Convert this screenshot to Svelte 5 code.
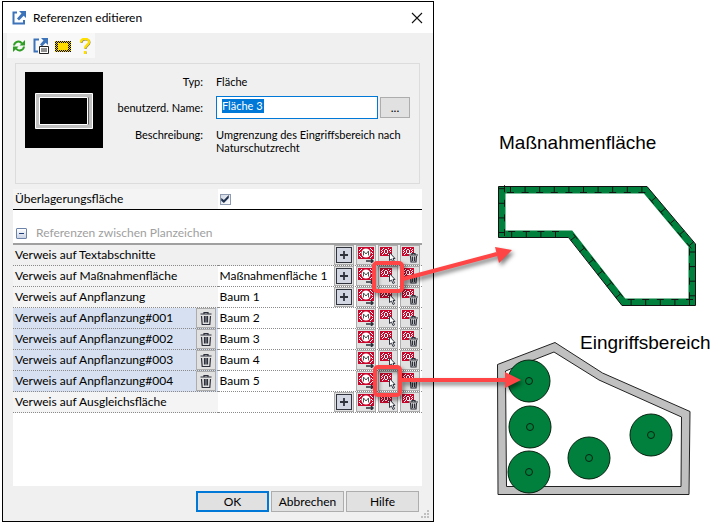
<script lang="ts">
  let name = $state('Fläche 3')
  let overlay = $state(true)

  const rows = [
    { label: 'Verweis auf Textabschnitte', value: '', add: true, kind: 'plain' },
    { label: 'Verweis auf Maßnahmenfläche', value: 'Maßnahmenfläche 1', add: true, kind: 'main' },
    { label: 'Verweis auf Anpflanzung', value: 'Baum 1', add: true, kind: 'main' },
    { label: 'Verweis auf Anpflanzung#001', value: 'Baum 2', add: false, kind: 'sub' },
    { label: 'Verweis auf Anpflanzung#002', value: 'Baum 3', add: false, kind: 'sub' },
    { label: 'Verweis auf Anpflanzung#003', value: 'Baum 4', add: false, kind: 'sub' },
    { label: 'Verweis auf Anpflanzung#004', value: 'Baum 5', add: false, kind: 'sub' },
    { label: 'Verweis auf Ausgleichsfläche', value: '', add: true, kind: 'main' }
  ]

  const trees = [[529, 381], [530, 427], [529, 472], [589, 458], [651, 435]]

  // edges of the planting area: start, end, distance of the first tick
  const edges = [
    [498.5, 186.5, 647, 186.5, 12],
    [647, 186.5, 695.5, 244, 14],
    [695.5, 244, 695.5, 305.5, 8],
    [695.5, 305.5, 622, 305.5, 6],
    [622, 305.5, 568.5, 237.5, 10],
    [568.5, 237.5, 498.5, 237.5, 13],
    [498.5, 237.5, 498.5, 186.5, 5]
  ]

  // every tick crosses the band and ends in a short bar along its inner side
  function ticks() {
    const out: string[] = []
    for (const [x1, y1, x2, y2, first] of edges) {
      const len = Math.hypot(x2 - x1, y2 - y1)
      const ux = (x2 - x1) / len
      const uy = (y2 - y1) / len
      for (let d = first; d < len - 1; d += 14.6) {
        const x = x1 + ux * d
        const y = y1 + uy * d
        const ix = x - uy * 6
        const iy = y + ux * 6
        out.push(`M${x} ${y}L${ix} ${iy}M${ix - ux * 3.5} ${iy - uy * 3.5}L${ix + ux * 3.5} ${iy + uy * 3.5}`)
      }
    }
    return out.join('')
  }
</script>

{#snippet trash()}
  <path d="M2.500 4h11M6 4V2.500h4V4M3.500 6l.7 8.500h7.600l.7-8.500M6.500 6v6.500M8 6v6.500M9.500 6v6.500" fill="none" stroke="#2c2f3a" stroke-width="1.200" />
{/snippet}

{#snippet plan()}
  <rect width="12" height="9" fill="#c9082d" />
  <path
    d="M3 1.500h1M8 1.500h1M2 2.500h1M5 2.500h2M10 2.500h1M1 3.500h1M4 3.500h1M7 3.500h1M9 3.500h1M2 4.500h1M4 4.500h1M7 4.500h1M10 4.500h1M1 5.500h1M4 5.500h1M7 5.500h1M9 5.500h1M3 6.500h1M5 6.500h2M10 6.500h1M2 7.500h1M8 7.500h2"
    stroke="#fff"
  />
{/snippet}

<svelte:head><title>Referenzen editieren</title></svelte:head>

<main>
  <section class="dialog">
    <header>
      <svg width="16" height="16" viewBox="0 0 16 16">
        <path d="M6 2.500H2.500V13.500H13V10" fill="none" stroke="#3d73b9" stroke-width="2" />
        <path d="M8 1h7v7l-2.300-2.300L8 10.500 6 8.500l4.500-5z" fill="#3d73b9" />
      </svg>
      <h1>Referenzen editieren</h1>
      <button class="close" aria-label="Schließen">
        <svg width="12" height="12" viewBox="0 0 12 12"><path d="M1 1l10 10M11 1L1 11" stroke="#111" stroke-width="1.100" /></svg>
      </button>
    </header>

    <nav>
      <button aria-label="Aktualisieren">
        <svg width="16" height="16" viewBox="0 0 16 16">
          <path d="M3 7.500C3.500 3.500 8.500 2 11 5.500M13 8.500C12.500 12.500 7.500 14 5 10.500" fill="none" stroke="#2f9e24" stroke-width="2" />
          <path d="M14 2v5.500H8.500zM2 14V8.500h5.500z" fill="#2f9e24" />
        </svg>
      </button>
      <button aria-label="Referenz">
        <svg width="16" height="16" viewBox="0 0 16 16">
          <path d="M6 1.500H1.500v12H5" fill="none" stroke="#3d73b9" stroke-width="2" />
          <path d="M8 0h7v7l-2.300-2.300L9 8.500 7 6.500l3.500-4z" fill="#3d73b9" />
          <path d="M6.500 8.500h9v7h-9zM8 11h6M8 13h6" fill="#fff" stroke="#222" />
        </svg>
      </button>
      <button aria-label="Fläche zeigen">
        <svg width="16" height="16" viewBox="0 0 16 16">
          <defs>
            <pattern id="dots" width="2" height="2" patternUnits="userSpaceOnUse">
              <rect width="2" height="2" fill="#f2cf00" /><path d="M0 0h1v1H0zM1 1h1v1H1z" fill="#000" />
            </pattern>
          </defs>
          <rect y="3" width="16" height="11" fill="url(#dots)" />
          <rect x="3" y="5" width="10" height="7" fill="#ffdc00" />
        </svg>
      </button>
      <button aria-label="Hilfe anzeigen">
        <svg width="16" height="16" viewBox="0 0 16 16">
          <path d="M4.500 5c0-5 8-4.500 8-.5 0 3-4 3-4 6.500M8.500 13.500v3" fill="none" stroke="#777" stroke-width="2" />
          <path d="M4 4.500c0-5 8-4.500 8-.5 0 3-4 3-4 6.500M8 13v3" fill="none" stroke="#ffdf00" stroke-width="2.400" />
        </svg>
      </button>
    </nav>

    <div class="group">
      <svg class="preview" width="78" height="76" viewBox="0 0 78 76">
        <rect width="78" height="76" />
        <rect x="12.500" y="23.500" width="53" height="31" fill="none" stroke="#c0c0c0" stroke-width="4" />
        <path d="M10.500 21.500h57v35h-57zM14.500 25.500h48v27h-48z" fill="none" stroke="#fff" />
      </svg>
      <div class="fields">
        <span class="key">Typ:</span>
        <span>Fläche</span>
        <label class="key" for="name">benutzerd. Name:</label>
        <div class="entry">
          <span class="box">
            <input id="name" bind:value={name} />
          </span>
          <button class="btn more">...</button>
        </div>
        <span class="key">Beschreibung:</span>
        <span>Umgrenzung des Eingriffsbereich nach Naturschutzrecht</span>
      </div>
    </div>

    <div class="list">
      <div class="overlay">
        <label for="overlay">Überlagerungsfläche</label>
        <div class="tick"><input id="overlay" type="checkbox" bind:checked={overlay} /></div>
      </div>

      <h2>
        <button class="fold" aria-label="Einklappen"></button>
        Referenzen zwischen Planzeichen
      </h2>

      <table>
        <tbody>
          {#each rows as row}
            <tr class={row.kind}>
              <th scope="row">
                <div class="cell">
                  <span>{row.label}</span>
                  {#if row.kind === 'sub'}
                    <button class="tool" aria-label="Löschen"><svg width="16" height="16" viewBox="0 0 16 16">{@render trash()}</svg></button>
                  {/if}
                </div>
              </th>
              <td>
                <div class="cell">
                  <span>{row.value}</span>
                  <div class="tools">
                    {#if row.add}
                      <button class="tool" aria-label="Hinzufügen">
                        <svg width="16" height="16" viewBox="0 0 16 16">
                          <rect x=".5" y=".5" width="15" height="15" fill="#d3d7e3" stroke="#30323c" />
                          <path d="M4 8h8M8 4v8" stroke="#30323c" stroke-width="1.800" />
                        </svg>
                      </button>
                    {/if}
                    <button class="tool" aria-label="Verknüpfen">
                      <svg width="16" height="16" viewBox="0 0 16 16">
                        <rect width="16" height="12" fill="#c9082d" />
                        <path
                          d="M3 1.500h1M2 2.500h1M1 3.500h1M2 5.500h1M1 6.500h1M1 8.500h1M2 9.500h1M3 10.500h1M12 1.500h1M13 2.500h1M14 3.500h1M13 5.500h1M14 6.500h1M14 8.500h1M13 9.500h1M12 10.500h1"
                          stroke="#fff"
                        />
                        <circle cx="8" cy="6" r="4.500" fill="#fff" />
                        <path d="M5.500 8.500V4l2.500 3 2.500-3v4.500" fill="none" stroke="#555" />
                        <path d="M8 14h7M13 12l2 2-2 2" fill="none" stroke="#2c2f3a" stroke-width="1.500" />
                      </svg>
                    </button>
                    <button class="tool" aria-label="Auswählen">
                      <svg width="16" height="16" viewBox="0 0 16 16">
                        {@render plan()}
                        <path d="M9.500 5.500v8l2-1.500 1.500 3.500 1.500-.7-1.500-3.300h2z" fill="#fff" stroke="#333742" />
                      </svg>
                    </button>
                    <button class="tool" aria-label="Entfernen">
                      <svg width="16" height="16" viewBox="0 0 16 16">
                        {@render plan()}
                        <path d="M7 6h9v10H7z" fill="#e1e1e1" />
                        <path d="M7 8h9M10 7.500V6.500h3v1M8.500 9l.5 6h5l.5-6M10.500 9.500v4.500M12.500 9.500v4.500" fill="none" stroke="#2c2f3a" stroke-width="1.200" />
                      </svg>
                    </button>
                  </div>
                </div>
              </td>
            </tr>
          {/each}
        </tbody>
      </table>
    </div>

    <footer>
      <button class="btn ok">OK</button>
      <button class="btn">Abbrechen</button>
      <button class="btn">Hilfe</button>
      <svg class="grip" width="8" height="8" viewBox="0 0 8 8">
        <path d="M6 0h2v2H6zM3 3h2v2H3zM6 3h2v2H6zM0 6h2v2H0zM3 6h2v2H3zM6 6h2v2H6z" fill="#bfbfbf" />
      </svg>
    </footer>
  </section>

  <svg class="drawing" viewBox="434 0 284 523">
    <text x="499" y="149">Maßnahmenfläche</text>
    <polygon points="502,190 645.500,190 692,245.500 692,302 623.500,302 570.500,234 502,234" fill="none" stroke="#00803c" stroke-width="7" />
    <polygon points="498.500,186.500 647,186.500 695.500,244 695.500,305.500 622,305.500 568.500,237.500 498.500,237.500" fill="none" stroke="#111" />
    <path d={ticks()} stroke="#111" />

    <text x="580" y="349">Eingriffsbereich</text>
    <path d="M497.500 364.500L555 342.500 602.500 373 690 411.500 689 494.500H498zM505.500 371L506.500 486.500H681L681.500 417 599 380 554 352z" fill="#c0c0c0" stroke="#222" fill-rule="evenodd" />
    {#each trees as [x, y]}
      <circle cx={x} cy={y} r="21" fill="#00803c" stroke="#06220f" />
      <circle cx={x} cy={y} r="3.500" fill="none" stroke="#06220f" />
    {/each}
  </svg>

  <!-- callouts lying over the dialog and the drawing -->
  <svg class="callouts" width="718" height="523" viewBox="0 0 718 523">
    <g fill="none" stroke="#ff4545" stroke-width="4">
      <rect x="374" y="263" width="28" height="28" rx="3" />
      <rect x="375" y="367" width="25" height="28" rx="3" />
      <path d="M403 279l94-25M402 380h104" />
    </g>
    <path d="M495 247l17 3-13 13zM505 372l16 8-16 8z" fill="#ff4545" />
  </svg>
</main>

<style>
  :global(body) {
    margin: 0;
    background: #fff;
  }

  main {
    position: relative;
    display: flex;
    align-items: flex-start;
    font: 12px/16px Lato, 'Open Sans', sans-serif;
    color: #000;
  }

  .dialog {
    flex: 0 1 432px;
    box-sizing: border-box;
    margin: 1px 0 0 2px;
    border: 1px solid #000;
    background: #f0f0f0;
  }

  .drawing {
    flex: 1 1 284px;
    min-width: 0;
    font: 19px 'Liberation Sans', Arial, sans-serif;
  }

  .callouts {
    position: absolute;
    top: 0;
    left: 0;
    pointer-events: none;
    filter: drop-shadow(2px 3px 2px rgba(0, 0, 0, 0.5));
  }

  button {
    font: inherit;
    color: inherit;
    padding: 0;
    border: 0;
    background: none;
  }

  button svg {
    display: block;
  }

  header {
    display: flex;
    align-items: center;
    gap: 6px;
    height: 31px;
    padding: 0 10px 0 8px;
    background: #fff;
  }

  h1 {
    flex: 1;
    margin: 0;
    font-size: 12px;
    font-weight: 400;
  }

  nav {
    display: flex;
    gap: 6px;
    width: 84px;
    margin-left: 4px;
    padding: 5px 0 4px 4px;
    background: #f8f8f8;
  }

  .group {
    display: flex;
    gap: 12px;
    box-sizing: border-box;
    height: 121px;
    margin: 5px 13px 5px 12px;
    padding: 8px 9px;
    border: 1px solid #dcdcdc;
    font-family: 'Open Sans', sans-serif;
    font-size: 10px;
    line-height: 13px;
  }

  .preview {
    flex: none;
  }

  .fields {
    flex: 1;
    display: grid;
    grid-template-columns: 88px 1fr;
    grid-template-rows: 18px 34px auto;
    column-gap: 13px;
    align-items: center;
    align-content: start;
    font: 11px/13px Lato, 'Open Sans', sans-serif;
  }

  .fields > :nth-last-child(-n + 2) {
    align-self: start;
    padding-top: 4px;
  }

  .key {
    text-align: right;
    white-space: nowrap;
  }

  .entry {
    display: flex;
    align-items: center;
    gap: 2px;
  }

  .box {
    flex: 1;
    display: flex;
    box-sizing: border-box;
    height: 23px;
    padding: 2px 5px 4px;
    border: 1px solid #0078d7;
    background: #fff;
  }

  .box input {
    field-sizing: content;
    height: 14px;
    padding: 0 1px 0 0;
    border: 0;
    outline: 0;
    background: #0078d7;
    color: #fff;
    font: inherit;
  }

  .btn {
    box-sizing: border-box;
    width: 73px;
    height: 21px;
    border: 1px solid #adadad;
    background: #e1e1e1;
    font-size: 12px;
  }

  .more {
    width: 30px;
  }

  .ok {
    border: 2px solid #0078d7;
  }

  .list {
    min-height: 297px;
    margin: 0 11px 0 10px;
    background: #fff;
  }

  .overlay {
    display: grid;
    grid-template-columns: 1fr 1fr;
    align-items: center;
    height: 20px;
    border-bottom: 1px solid #000;
    background: #f4f4f4;
  }

  .overlay label {
    padding-left: 2px;
  }

  .tick {
    display: flex;
    align-items: center;
    height: 20px;
    padding-left: 2px;
    background: #fff;
  }

  .tick input {
    appearance: none;
    display: grid;
    width: 11px;
    height: 11px;
    margin: 0;
    border: 1px solid #8e9bb0;
    background: linear-gradient(135deg, #cfd6e2, #fff);
  }

  .tick input:checked::before {
    content: '';
    background: #20304f;
    clip-path: polygon(8% 40%, 38% 60%, 92% 5%, 92% 38%, 38% 95%, 8% 70%);
  }

  h2 {
    display: flex;
    align-items: center;
    gap: 9px;
    height: 20px;
    margin: 13px 0 0;
    padding: 0 3px;
    border-bottom: 2px solid #a0a0a0;
    color: #a0a0a0;
    font-size: 12px;
    font-weight: 400;
  }

  .fold {
    width: 11px;
    height: 11px;
    border: 1px solid #6d83a8;
    border-radius: 1px;
    background: linear-gradient(#1d3c78, #1d3c78) center / 5px 1px no-repeat, linear-gradient(#fff, #c9d3e4);
  }

  table {
    width: 100%;
    border-collapse: separate;
    border-spacing: 0;
    table-layout: fixed;
  }

  th,
  td {
    box-sizing: border-box;
    height: 21px;
    padding: 0;
    border-bottom: 1px dotted #8a8a8a;
    font-weight: 400;
    text-align: left;
  }

  th {
    background: #f4f4f4;
  }

  .plain > * {
    background: #f0f0f0;
  }

  .sub th {
    background: #d7e0f0;
  }

  .cell {
    display: flex;
    align-items: center;
    justify-content: space-between;
    height: 20px;
    padding: 0 2px;
    white-space: nowrap;
  }

  .tools {
    display: flex;
    gap: 2px;
  }

  .tool {
    display: grid;
    place-items: center;
    width: 20px;
    height: 20px;
    border: 1px solid #acacac;
    background: #e1e1e1;
  }

  footer {
    display: flex;
    align-items: center;
    gap: 2px;
    justify-content: flex-end;
    padding: 5px 4px 9px;
  }

  .grip {
    align-self: flex-end;
    margin-bottom: -6px;
  }
</style>
